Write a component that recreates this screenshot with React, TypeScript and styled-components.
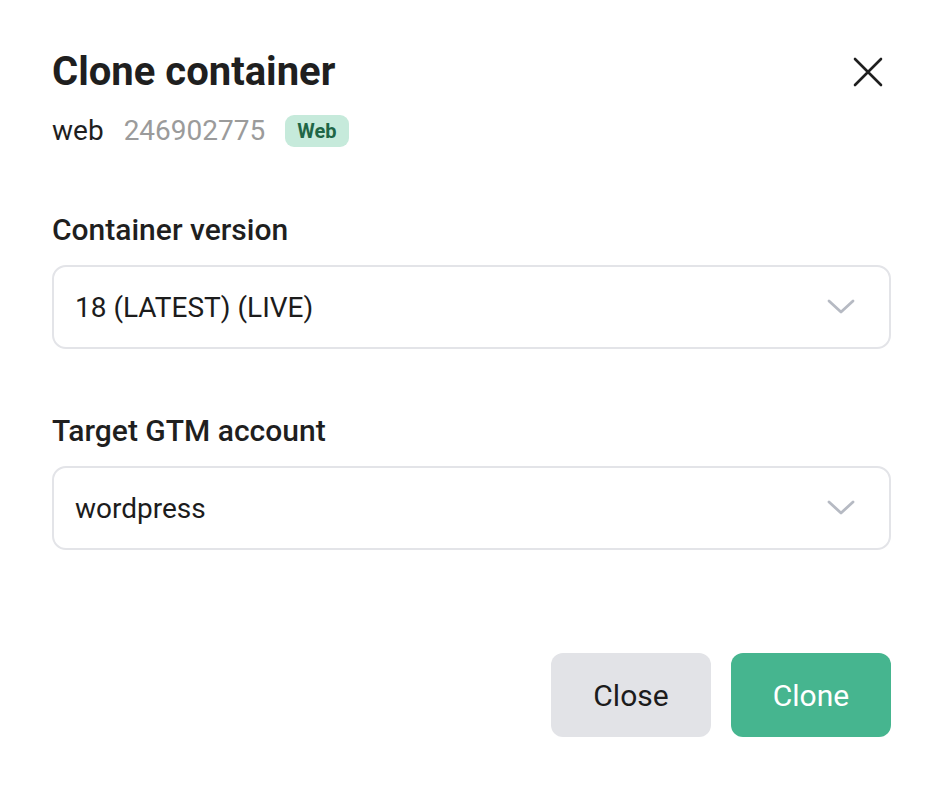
import styled, { createGlobalStyle } from "styled-components"

const Global = createGlobalStyle`
    html, body {
        margin: 0;
        padding: 0;
        background: #ffffff;
    }
    body {
        font-family: Roboto, "Liberation Sans", sans-serif;
        color: #1f1f1f;
    }
`

function Chevron() {
    return (
        <svg width="28" height="16" viewBox="0 0 28 16" fill="none">
            <path d="M2 2 L14 13 L26 2" stroke="#b6bac3" strokeWidth="2.8" strokeLinecap="round" strokeLinejoin="round" />
        </svg>
    )
}

function CloseIcon() {
    return (
        <svg width="30" height="30" viewBox="0 0 30 30" fill="none">
            <path d="M2 2 L28 28 M28 2 L2 28" stroke="#1f1f1f" strokeWidth="2.6" strokeLinecap="round" />
        </svg>
    )
}

export default function App() {
    return (
        <>
            <Global />
            <Dialog>
                <Header>
                    <Title>Clone container</Title>
                    <IconButton aria-label="Close">
                        <CloseIcon />
                    </IconButton>
                </Header>
                <Meta>
                    <span>web</span>
                    <ContainerId>246902775</ContainerId>
                    <Badge>Web</Badge>
                </Meta>

                <Field>
                    <Label>Container version</Label>
                    <Select>
                        <span>18 (LATEST) (LIVE)</span>
                        <Chevron />
                    </Select>
                </Field>

                <Field>
                    <Label>Target GTM account</Label>
                    <Select>
                        <span>wordpress</span>
                        <Chevron />
                    </Select>
                </Field>

                <Actions>
                    <ActionButton>Close</ActionButton>
                    <ActionButton $primary>Clone</ActionButton>
                </Actions>
            </Dialog>
        </>
    )
}

const Dialog = styled.div`
    box-sizing: border-box;
    width: 946px;
    height: 786px;
    padding: 48px 55px 49px 52px;
    display: flex;
    flex-direction: column;
`

const Header = styled.div`
    display: flex;
    align-items: center;
    justify-content: space-between;
`

const Title = styled.h1`
    margin: 0;
    font-size: 40px;
    line-height: 47px;
    font-weight: 700;
    color: #1f1f1f;
`

const IconButton = styled.button`
    border: none;
    background: none;
    padding: 0;
    margin-right: 8px;
    display: flex;
    cursor: pointer;
`

const Meta = styled.div`
    display: flex;
    align-items: center;
    gap: 20px;
    margin-top: 19px;
    font-size: 28px;
    line-height: 34px;
    color: #1f1f1f;
`

const ContainerId = styled.span`
    color: #9b9b9b;
`

const Badge = styled.span`
    background: #c6eadb;
    color: #1f6646;
    font-size: 20px;
    font-weight: 700;
    line-height: 32px;
    padding: 0 12px;
    border-radius: 9px;
`

const Field = styled.div`
    display: flex;
    flex-direction: column;
    gap: 17px;
    margin-top: 64px;

    & + & {
        margin-top: 64px;
    }
`

const Label = styled.div`
    font-size: 30px;
    line-height: 36px;
    font-weight: 500;
    color: #1f1f1f;
`

const Select = styled.div`
    box-sizing: border-box;
    height: 84px;
    border: 2px solid #e3e4e8;
    border-radius: 14px;
    padding: 0 34px 0 21px;
    display: flex;
    align-items: center;
    justify-content: space-between;
    font-size: 28px;
    color: #1c1c1c;
`

const Actions = styled.div`
    margin-top: auto;
    display: flex;
    justify-content: flex-end;
    gap: 20px;
`

const ActionButton = styled.button<{ $primary?: boolean }>`
    width: 160px;
    height: 84px;
    border: none;
    border-radius: 12px;
    font-family: Roboto, "Liberation Sans", sans-serif;
    font-size: 30px;
    font-weight: 400;
    background: ${({ $primary }) => ($primary ? "#46b58f" : "#e2e3e7")};
    color: ${({ $primary }) => ($primary ? "#ffffff" : "#1c1c1c")};
    cursor: pointer;
`
